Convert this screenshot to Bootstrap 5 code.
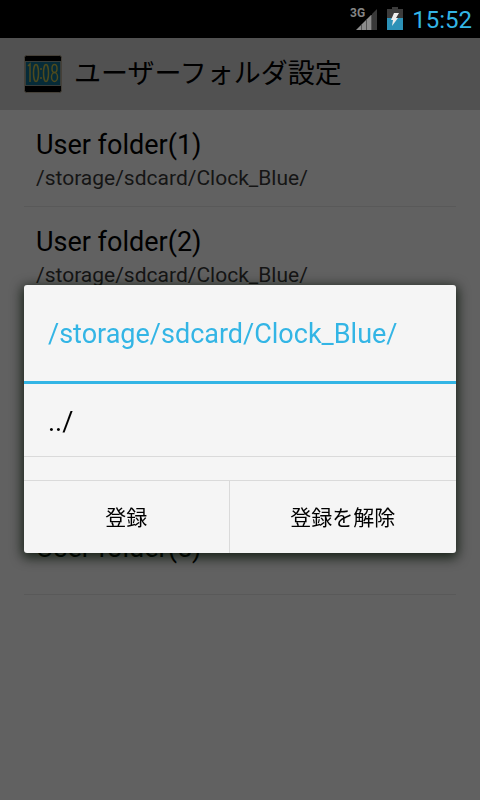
<!DOCTYPE html>
<html lang="ja">
<head>
<meta charset="utf-8">
<meta name="viewport" content="width=device-width, initial-scale=1">
<title>ユーザーフォルダ設定</title>
<link href="https://cdn.jsdelivr.net/npm/bootstrap@5.3.0/dist/css/bootstrap.min.css" rel="stylesheet">
<style>
body { background: #616161; color: #000; font-family: Roboto, "Noto Sans CJK JP", sans-serif; }
.status-bar { height: 38px; background: #000; color: #33b5e5; font-size: 24px; line-height: 38px; }
.clock { padding-top: 2px; }
.app-bar { height: 72px; background: #515151; }
.app-icon { margin-right: 10px; }
.screen-title { font-size: 27px; line-height: 36px; font-weight: 400; }
.folder { height: 97px; padding: 4px 12px 0; border-bottom: 1px solid #595959; }
.folder-name { font-size: 27px; line-height: 36px; }
.folder-path { font-size: 21px; line-height: 30px; color: #151515; }
.dialog-layer { position: fixed; inset: 38px 0 0; }
.dialog-box { background: #f5f5f5; border-radius: 3px; overflow: hidden; box-shadow: 0 3px 12px 2px rgba(0, 14, 0, .75); }
.dialog-heading { height: 99px; padding-top: 2px; font-size: 27px; line-height: 36px; font-weight: 400; color: #33b5e5; border-bottom: 3px solid #33b5e5; }
.dir-list { height: 96px; }
.dir-entry { height: 73px; padding-top: 4px; font-size: 27px; color: #000; border-bottom: 1px solid #dadada; }
.actions { height: 73px; border-top: 1px solid #dadada; }
.action { padding-top: 10px; font-size: 21px; font-weight: 400; color: #000; background: transparent; flex: 227 1 0; }
.action-set { flex-grow: 205; border-right: 1px solid #dadada; }
</style>
<script src="https://cdn.jsdelivr.net/npm/bootstrap@5.3.0/dist/js/bootstrap.bundle.min.js"></script>
</head>
<body>
<div class="status-bar d-flex align-items-center justify-content-end pe-2">
  <svg width="28" height="26" viewBox="0 0 28 26" aria-label="3G">
    <path d="M6 24 21 9V24Z" fill="#8c8c8c"/>
    <path d="M22 8 27 3V24H22Z" fill="#393939"/>
    <path d="M11.500 19V24M16.500 14V24M21.500 9V24" stroke="#555"/>
    <text x="0" y="11" font-family="Roboto, sans-serif" font-size="12" font-weight="700" fill="#858585">3G</text>
  </svg>
  <svg class="ms-2 me-2" width="18" height="24" viewBox="0 0 18 24" aria-hidden="true">
    <path d="M6 0H12V2H17V11H1V2H6Z" fill="#3c3c3c"/>
    <path d="M1 11H17V23H1Z" fill="#2c91b7"/>
    <path d="M8 6H13L10 11H12L6 19 7 13H5Z" fill="#eee"/>
  </svg>
  <span class="clock">15:52</span>
</div>
<header class="app-bar d-flex align-items-center px-4">
  <svg class="app-icon flex-shrink-0" width="40" height="40" viewBox="0 0 40 40" aria-hidden="true">
    <rect x="0.500" y="1.500" width="37" height="37" rx="2" fill="#000" stroke="#454038"/>
    <rect x="1.500" y="7.500" width="35" height="24" fill="#062b38" stroke="#393d3a"/>
    <g fill="none" stroke="#4d4a1e" stroke-width="1.500">
      <path d="M4 12 6 10V28"/>
      <ellipse cx="12" cy="19" rx="2.500" ry="8.500"/>
      <path d="M17 14V16M17 23V25"/>
      <ellipse cx="22" cy="19" rx="2.500" ry="8.500"/>
      <ellipse cx="30.500" cy="14.500" rx="2.500" ry="4"/>
      <ellipse cx="30.500" cy="23" rx="3" ry="4.500"/>
    </g>
  </svg>
  <h1 class="screen-title m-0">ユーザーフォルダ設定</h1>
</header>
<main class="px-4">
  <ul class="list-unstyled m-0">
    <li class="folder d-flex flex-column justify-content-center"><div class="folder-name">User folder(1)</div><div class="folder-path">/storage/sdcard/Clock_Blue/</div></li>
    <li class="folder d-flex flex-column justify-content-center"><div class="folder-name">User folder(2)</div><div class="folder-path">/storage/sdcard/Clock_Blue/</div></li>
    <li class="folder"></li>
    <li class="folder"></li>
    <li class="folder d-flex flex-column justify-content-center"><div class="folder-name">User folder(5)</div></li>
  </ul>
</main>
<div class="dialog-layer d-flex align-items-center px-4">
  <section class="dialog-box w-100" role="dialog" aria-labelledby="folder-heading">
    <h2 class="dialog-heading d-flex align-items-center px-4 m-0" id="folder-heading">/storage/sdcard/Clock_Blue/</h2>
    <div class="dir-list">
      <a class="dir-entry d-flex align-items-center px-4 text-decoration-none" href="#">../</a>
    </div>
    <div class="actions d-flex">
      <button type="button" class="action action-set btn px-0 rounded-0 border-top-0 border-bottom-0 border-start-0">登録</button>
      <button type="button" class="action btn px-0 border-0 rounded-0">登録を解除</button>
    </div>
  </section>
</div>
</body>
</html>
